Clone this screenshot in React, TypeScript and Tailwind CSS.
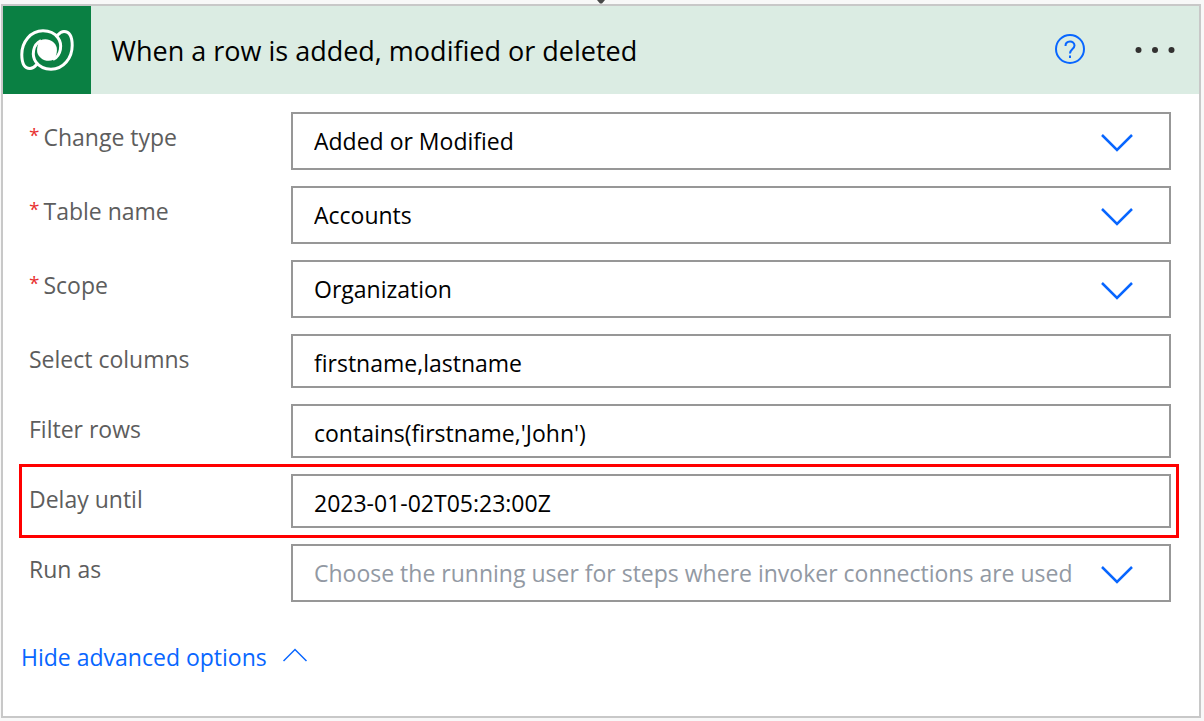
import React from 'react';

type Field = {
  id: string;
  label: string;
  kind: 'select' | 'text';
  value?: string;
  placeholder?: string;
  required?: boolean;
  highlighted?: boolean;
};

const fields: Field[] = [
  { id: 'change-type', label: 'Change type', kind: 'select', value: 'Added or Modified', required: true },
  { id: 'table-name', label: 'Table name', kind: 'select', value: 'Accounts', required: true },
  { id: 'scope', label: 'Scope', kind: 'select', value: 'Organization', required: true },
  { id: 'select-columns', label: 'Select columns', kind: 'text', value: 'firstname,lastname' },
  { id: 'filter-rows', label: 'Filter rows', kind: 'text', value: "contains(firstname,'John')" },
  { id: 'delay-until', label: 'Delay until', kind: 'text', value: '2023-01-02T05:23:00Z', highlighted: true },
  {
    id: 'run-as',
    label: 'Run as',
    kind: 'select',
    placeholder: 'Choose the running user for steps where invoker connections are used',
  },
];

function DataverseLogo() {
  return (
    <svg viewBox="0 0 54 42" className="h-[42px] w-[54px]" fill="none" stroke="#fff" strokeWidth="3" aria-hidden="true">
      <path d="M33 30.500C41.500 26.500 42.500 15 38 8.800C34.500 4 29 1.800 23 1.800C10.500 1.800 1.800 13 1.800 25.500C1.800 35 5 39.500 10 39.500C14 39.500 15.500 36.500 18 34" />
      <path d="M21 11.500C12.500 15.500 11.500 27 16 33.200C19.500 38 25 40.200 31 40.200C43.500 40.200 52.200 29 52.200 16.500C52.200 7 49 2.500 44 2.500C40 2.500 38.500 5.500 36 8" />
      <path d="M20 11.500C27 8 35.500 12 36.800 19C37.300 22.500 36.500 27 34 30.500C27 34 18.500 30 17.200 23C16.700 19.500 17.500 15 20 11.500Z" fill="#fff" stroke="none" />
    </svg>
  );
}

function SelectField({ field }: { field: Field }) {
  return (
    <div className="grid min-w-0 flex-1 items-center">
      <select
        id={field.id}
        defaultValue={field.value ?? ''}
        className={`col-start-1 row-start-1 h-[58px] w-full appearance-none border-2 border-[#979797] bg-white pr-20 pl-[21px] text-[23px] ${field.value ? 'text-black' : 'text-[#9299a3]'}`}
      >
        <option value={field.value ?? ''}>{field.value ?? field.placeholder}</option>
      </select>
      <svg
        viewBox="0 0 32 18"
        className="pointer-events-none col-start-1 row-start-1 mt-1 mr-[38px] h-[18px] w-8 justify-self-end"
        fill="none"
        stroke="#0866ff"
        strokeWidth="2.500"
        aria-hidden="true"
      >
        <path d="M1 1L16 16L31 1" />
      </svg>
    </div>
  );
}

function FieldRow({ field }: { field: Field }) {
  return (
    <div className="relative flex">
      <label htmlFor={field.id} className="flex w-[262px] shrink-0 pt-[9px] text-[23px] leading-8 text-[#5d5d5d]">
        {field.required && <span className="mr-1 text-[19px] leading-7 text-[#e8302f]">*</span>}
        {field.label}
      </label>
      {field.kind === 'select' ? (
        <SelectField field={field} />
      ) : (
        <input
          id={field.id}
          type="text"
          defaultValue={field.value}
          className="h-[54px] min-w-0 flex-1 border-2 border-[#979797] bg-white px-[21px] pt-1 text-[23px] text-black"
        />
      )}
      {field.highlighted && (
        <span className="pointer-events-none absolute -inset-y-2.5 -right-2 -left-2.5 border-[3px] border-[#ff0000]" />
      )}
    </div>
  );
}

export default function App() {
  return (
    <div className="relative min-h-screen bg-[#f8f8f8] pt-1 pr-[3px] pb-[3px] pl-px font-['Open_Sans','Noto_Sans',sans-serif]">
      <svg viewBox="0 0 8 4" className="absolute top-0 left-[597px] h-1 w-2" aria-hidden="true">
        <path d="M0 0H8L5 3.500H3Z" fill="#484848" />
      </svg>
      <section className="border-2 border-[#c8c8c8] bg-white">
        <header className="flex h-[88px] items-center bg-[#dbece3]">
          <div className="flex size-[88px] shrink-0 items-center justify-center bg-[#0a8043]">
            <DataverseLogo />
          </div>
          <h1 className="ml-5 flex-1 pt-0.5 text-[27px] text-black">When a row is added, modified or deleted</h1>
          <button type="button" aria-label="Help" className="mr-[49px] pb-0.5">
            <svg viewBox="0 0 32 32" className="size-8" fill="none" stroke="#0866ff" strokeWidth="2" aria-hidden="true">
              <circle cx="16" cy="16" r="14" />
              <path d="M11.500 13C11.500 7.200 20.500 7.200 20.500 12.500C20.500 16 16 16 16 20.500M16 22.500V25" />
            </svg>
          </button>
          <button type="button" aria-label="More options" className="mr-6">
            <svg viewBox="0 0 40 8" className="h-2 w-10" fill="#323130" aria-hidden="true">
              <circle cx="3.500" cy="4" r="3" />
              <circle cx="20" cy="4" r="3" />
              <circle cx="36.500" cy="4" r="3" />
            </svg>
          </button>
        </header>
        <form className="flex flex-col gap-4 pt-[18px] pr-7 pl-[26px]">
          {fields.map((field) => (
            <FieldRow key={field.id} field={field} />
          ))}
        </form>
        <button type="button" className="mt-[39px] mb-[43px] ml-[18px] flex items-center gap-4 text-[23px] leading-8 text-[#0866ff]">
          Hide advanced options
          <svg viewBox="0 0 24 14" className="mb-1 h-[14px] w-6" fill="none" stroke="#0866ff" strokeWidth="1.500" aria-hidden="true">
            <path d="M0.500 13L12 1.500L23.500 13" />
          </svg>
        </button>
      </section>
    </div>
  );
}
